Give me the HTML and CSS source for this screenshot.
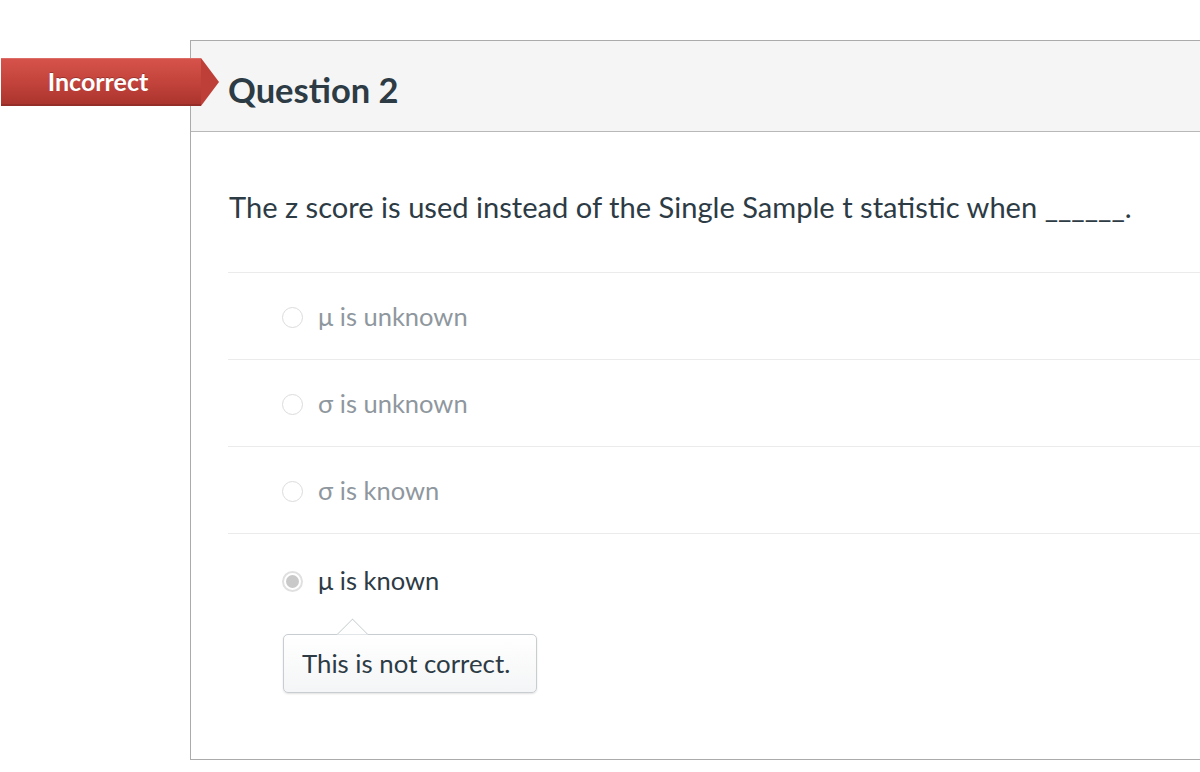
FILE: index.html
```html
<!DOCTYPE html>
<html>
<head>
<meta charset="utf-8">
<link rel="stylesheet" href="styles.css">
</head>
<body>
<div class="page">
  <div class="question">
    <div class="banner"><span>Incorrect</span></div>
    <div class="q-header">
      <h2 class="q-name">Question 2</h2>
    </div>
    <div class="q-text">The z score is used instead of the Single Sample t statistic when ______.</div>
    <div class="answers">
      <div class="answer">
        <span class="radio"></span>
        <span class="label muted">μ is unknown</span>
      </div>
      <div class="answer">
        <span class="radio"></span>
        <span class="label muted">σ is unknown</span>
      </div>
      <div class="answer">
        <span class="radio"></span>
        <span class="label muted">σ is known</span>
      </div>
      <div class="answer selected">
        <div class="answer-row">
          <span class="radio checked"></span>
          <span class="label">μ is known</span>
        </div>
        <div class="comment">This is not correct.</div>
      </div>
    </div>
  </div>
</div>
</body>
</html>
```
FILE: styles.css
```css
html, body {
  margin: 0;
  padding: 0;
  background: #fff;
  overflow: hidden;
}
body {
  font-family: Lato, "Open Sans", "Liberation Sans", sans-serif;
  color: #2d3b45;
}
.page {
  width: 1200px;
  height: 772px;
  padding-top: 40px;
  box-sizing: border-box;
  overflow: hidden;
}
.question {
  position: relative;
  margin-left: 190px;
  width: 1100px;
  height: 720px;
  border: 1px solid #ababab;
  box-sizing: border-box;
}
.banner {
  position: absolute;
  left: -190px;
  top: 17px;
  width: 200px;
  height: 48px;
  background: linear-gradient(#d6534b, #c1423a 55%, #a8332d);
  box-shadow: inset 0 1px 0 rgba(255,255,255,0.15), inset 0 -2px 0 rgba(0,0,0,0.12);
  display: flex;
  align-items: center;
  justify-content: center;
  padding-right: 6px;
  box-sizing: border-box;
}
.banner::after {
  content: "";
  position: absolute;
  right: -18px;
  top: 0;
  width: 0;
  height: 0;
  border-top: 24px solid transparent;
  border-bottom: 24px solid transparent;
  border-left: 18px solid #bd3f37;
}
.banner span {
  color: #fff;
  font-weight: 700;
  font-size: 25px;
  text-shadow: 0 -1px 0 rgba(0,0,0,0.25);
  margin-top: -2px;
}
.q-header {
  height: 90px;
  background: #f5f5f5;
  border-bottom: 1px solid #b8b8b8;
  display: flex;
  align-items: center;
  padding-left: 37px;
}
.q-name {
  margin: 0;
  font-size: 34.5px;
  font-weight: 700;
  color: #2d3b45;
  padding-top: 6px;
}
.q-text {
  padding: 57px 0 0 1px;
  height: 83px;
  font-size: 29.1px;
  line-height: 36px;
  border-bottom: 1px solid #ebebeb;
  margin-left: 37px;
  box-sizing: content-box;
}
.answers {
  margin-left: 37px;
}
.answer {
  height: 86px;
  border-bottom: 1px solid #ebebeb;
  display: flex;
  align-items: center;
  padding-left: 54px;
}
.answer.selected {
  border-bottom: none;
  display: block;
  height: auto;
  padding-top: 31px;
}
.answer-row {
  display: flex;
  align-items: center;
}
.radio {
  width: 21px;
  height: 21px;
  border-radius: 50%;
  border: 1px solid #dcdcdc;
  background: #fff;
  box-sizing: border-box;
  margin-right: 15px;
  position: relative;
  margin-top: 2px;
}
.radio.checked {
  border: 2px solid #e0e0e0;
}
.radio.checked::after {
  content: "";
  position: absolute;
  left: 2px;
  top: 2px;
  width: 13px;
  height: 13px;
  border-radius: 50%;
  background: #c9c9c9;
}
.label {
  font-size: 25.5px;
  line-height: 30px;
}
.muted {
  color: #8f979e;
}
.comment {
  position: relative;
  margin-top: 39px;
  margin-left: 1px;
  width: 254px;
  height: 59px;
  box-sizing: border-box;
  border: 1px solid #c7cdd1;
  border-radius: 5px;
  background: linear-gradient(#fff, #f4f5f6);
  box-shadow: 0 1px 2px rgba(0,0,0,0.12);
  font-size: 25.8px;
  line-height: 57px;
  padding-left: 18px;
}
.comment::before {
  content: "";
  position: absolute;
  left: 57px;
  width: 22px;
  height: 22px;
  background: #fff;
  border-left: 1px solid #c7cdd1;
  border-top: 1px solid #c7cdd1;
  transform: rotate(45deg);
  top: -12px;
  clip-path: polygon(0 0, 100% 0, 0 100%);
}
```
